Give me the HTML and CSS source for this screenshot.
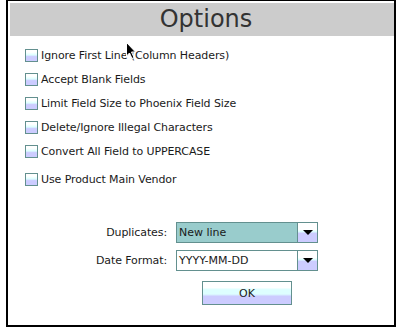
FILE: index.html
```html
<!DOCTYPE html>
<html lang="en">

<head>
    <meta charset="UTF-8">
    <title>Options</title>
    <link rel="stylesheet" href="styles.css">
</head>

<body>
    <div class="dialog">
        <div class="title">Options</div>

        <div class="checks">
            <label class="check"><span class="box"></span>Ignore First Line (Column Headers)</label>
            <label class="check"><span class="box"></span>Accept Blank Fields</label>
            <label class="check"><span class="box"></span>Limit Field Size to Phoenix Field Size</label>
            <label class="check"><span class="box"></span>Delete/Ignore Illegal Characters</label>
            <label class="check"><span class="box"></span>Convert All Field to UPPERCASE</label>
            <label class="check last"><span class="box"></span>Use Product Main Vendor</label>
        </div>

        <div class="form">
            <span class="label">Duplicates:</span>
            <div class="combo">
                <span class="value selected">New line</span>
                <span class="arrow"><svg width="10" height="5" viewBox="0 0 10 5"><path d="M0 0H10L5 5Z" fill="#000"/></svg></span>
            </div>

            <span class="label">Date Format:</span>
            <div class="combo">
                <span class="value">YYYY-MM-DD</span>
                <span class="arrow"><svg width="10" height="5" viewBox="0 0 10 5"><path d="M0 0H10L5 5Z" fill="#000"/></svg></span>
            </div>

            <button class="ok">OK</button>
        </div>

        <!-- mouse pointer sitting over the dialog -->
        <svg class="cursor" width="11" height="17" viewBox="0 0 11 17">
            <path d="M0.5 0.5V14L3.5 11L6 16.5L8 15.5L5.5 10H9.5Z" fill="#000" stroke="#fff" stroke-width="1"/>
        </svg>
    </div>
</body>

</html>
```

FILE: styles.css
```css
body {
    margin: 0;
    background-color: #fff;
    font-family: 'DejaVu Sans', sans-serif;
    color: #333;
}

.dialog {
    position: relative;
    width: 384px;
    height: 322px;
    margin-left: 6px;
    border: 2px solid #000;
    border-top-width: 1px;
    background-color: #fff;
    padding: 2px 0 0 2px;
    box-sizing: content-box;
}

.title {
    height: 33px;
    line-height: 33px;
    background-color: #cccccc;
    text-align: center;
    font-size: 24px;
    color: #333;
    padding-left: 8px;
}

.checks {
    display: flex;
    flex-direction: column;
    margin-top: 7px;
    padding-left: 15px;
}

.check {
    display: flex;
    align-items: center;
    height: 24px;
    font-size: 11px;
    letter-spacing: -0.1px;
    color: #1a1a1a;
}

.check.last {
    margin-top: 4px;
}

.box {
    width: 11px;
    height: 11px;
    border: 1px solid #63908f;
    margin-right: 3px;
    background: linear-gradient(#ffffff 0%, #ffffff 20%, #ddffff 45%, #ccccff 60%, #ccccff 100%);
}

.form {
    display: grid;
    grid-template-columns: 157px 142px;
    column-gap: 9px;
    row-gap: 7px;
    margin-top: 31px;
    align-items: center;
}

.label {
    text-align: right;
    font-size: 11px;
    letter-spacing: -0.1px;
    color: #1a1a1a;
}

.combo {
    display: flex;
    height: 21px;
    box-sizing: border-box;
    border: 1px solid #63908f;
}

.value {
    flex: 1;
    font-size: 11px;
    color: #1a1a1a;
    line-height: 19px;
    padding-left: 2px;
    background-color: #fff;
    border-right: 1px solid #63908f;
}

.value.selected {
    background-color: #99cccc;
}

.arrow {
    width: 19px;
    display: flex;
    align-items: center;
    justify-content: center;
    background: linear-gradient(#ffffff 0%, #ffffff 35%, #ddffff 45%, #ccccff 55%, #ccccff 100%);
}

.ok {
    grid-column: 2;
    justify-self: center;
    width: 90px;
    height: 24px;
    margin-top: 3px;
    border: 1px solid #63908f;
    font-family: 'DejaVu Sans', sans-serif;
    font-size: 11px;
    color: #1a1a1a;
    padding: 0;
    background: linear-gradient(#ffffff 0%, #ffffff 25%, #ddffff 35%, #ddffff 55%, #ccccff 65%, #ccccff 100%);
}

.cursor {
    position: absolute;
    left: 118px;
    top: 41px;
}
```
